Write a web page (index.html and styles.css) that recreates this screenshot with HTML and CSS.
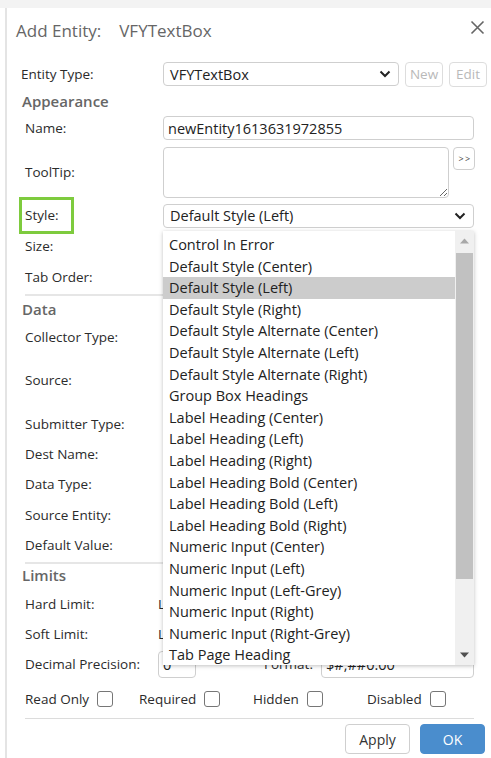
FILE: index.html
```html
<!DOCTYPE html>
<html lang="en">
<head>
<meta charset="utf-8">
<title>Add Entity</title>
<link rel="stylesheet" href="styles.css">
</head>
<body>
<div class="topstrip"></div>
<div class="dialog">
  <header class="dlg-head">
    <h1 class="dlg-title">Add Entity:<span class="dlg-entity">VFYTextBox</span></h1>
    <button class="close" aria-label="Close">
      <svg width="15" height="15" viewBox="0 0 15 15"><path d="M1.5 1.5 L13.5 13.5 M13.5 1.5 L1.5 13.5" stroke="#666" stroke-width="1.6" fill="none"/></svg>
    </button>
  </header>

  <div class="form">
    <div class="row row-entity">
      <label class="lbl">Entity Type:</label>
      <div class="ctl ctl-inline">
        <div class="select sel-entity"><span>VFYTextBox</span>
          <svg class="chev" width="12" height="8" viewBox="0 0 12 8"><path d="M1.5 1.5 L6 6 L10.5 1.5" stroke="#222" stroke-width="2" fill="none"/></svg>
        </div>
        <button class="btn-sm" disabled>New</button>
        <button class="btn-sm" disabled>Edit</button>
      </div>
    </div>

    <h2 class="section h-appear">Appearance</h2>
    <div class="row r-name">
      <label class="lbl">Name:</label>
      <div class="ctl"><input class="input w-full" type="text" value="newEntity1613631972855"></div>
    </div>
    <div class="row r-tip">
      <label class="lbl">ToolTip:</label>
      <div class="ctl ctl-top">
        <textarea class="textarea"></textarea>
        <button class="btn-more">&gt; &gt;</button>
      </div>
    </div>
    <div class="row r-style">
      <label class="lbl"><span class="hl">Style:</span></label>
      <div class="ctl">
        <div class="select w-full"><span>Default Style (Left)</span>
          <svg class="chev" width="12" height="8" viewBox="0 0 12 8"><path d="M1.5 1.5 L6 6 L10.5 1.5" stroke="#222" stroke-width="2" fill="none"/></svg>
        </div>
      </div>
    </div>
    <div class="row r-size"><label class="lbl">Size:</label></div>
    <div class="row r-tab"><label class="lbl">Tab Order:</label></div>
    <hr class="sep sep-a">

    <h2 class="section h-data">Data</h2>
    <div class="row r-coll"><label class="lbl">Collector Type:</label></div>
    <div class="row r-src"><label class="lbl">Source:</label></div>
    <div class="row r-sub"><label class="lbl">Submitter Type:</label></div>
    <div class="row r-dest"><label class="lbl">Dest Name:</label></div>
    <div class="row r-dtype"><label class="lbl">Data Type:</label></div>
    <div class="row r-sent"><label class="lbl">Source Entity:</label></div>
    <div class="row r-def"><label class="lbl">Default Value:</label></div>
    <hr class="sep sep-b">

    <h2 class="section h-lim">Limits</h2>
    <div class="row r-hard"><label class="lbl">Hard Limit:</label><span class="peek">L</span></div>
    <div class="row r-soft"><label class="lbl">Soft Limit:</label><span class="peek">L</span></div>
    <div class="row r-dec">
      <label class="lbl">Decimal Precision:</label>
      <input class="input in-dec" type="text" value="0">
      <span class="fmt-lbl">Format:</span>
      <input class="input in-fmt" type="text" value="$#,##0.00">
    </div>

    <div class="checks">
      <label class="chk">Read Only <span class="box"></span></label>
      <label class="chk">Required <span class="box"></span></label>
      <label class="chk">Hidden <span class="box"></span></label>
      <label class="chk">Disabled <span class="box"></span></label>
    </div>
    <hr class="sep sep-c">

    <div class="actions">
      <button class="btn btn-apply">Apply</button>
      <button class="btn btn-ok">OK</button>
    </div>
  </div>

  <!-- open list of the Style select -->
  <div class="dropdown">
    <ul class="options">
      <li>Control In Error</li>
      <li>Default Style (Center)</li>
      <li class="selected">Default Style (Left)</li>
      <li>Default Style (Right)</li>
      <li>Default Style Alternate (Center)</li>
      <li>Default Style Alternate (Left)</li>
      <li>Default Style Alternate (Right)</li>
      <li>Group Box Headings</li>
      <li>Label Heading (Center)</li>
      <li>Label Heading (Left)</li>
      <li>Label Heading (Right)</li>
      <li>Label Heading Bold (Center)</li>
      <li>Label Heading Bold (Left)</li>
      <li>Label Heading Bold (Right)</li>
      <li>Numeric Input (Center)</li>
      <li>Numeric Input (Left)</li>
      <li>Numeric Input (Left-Grey)</li>
      <li>Numeric Input (Right)</li>
      <li>Numeric Input (Right-Grey)</li>
      <li>Tab Page Heading</li>
    </ul>
    <div class="scrollbar">
      <svg class="arrow" width="9" height="6" viewBox="0 0 9 6"><path d="M0 5.5 L4.5 0.5 L9 5.5 Z" fill="#a8a8a8"/></svg>
      <div class="track"><div class="thumb"></div></div>
      <svg class="arrow" width="9" height="6" viewBox="0 0 9 6"><path d="M0 0.5 L4.5 5.5 L9 0.5 Z" fill="#505050"/></svg>
    </div>
  </div>
</div>
</body>
</html>
```

FILE: styles.css
```css
* { box-sizing: border-box; }

html, body {
  margin: 0;
  padding: 0;
  background: #fff;
  font-family: "Open Sans", "Noto Sans", sans-serif;
  font-size: 13.5px;
  color: #2b2b2b;
}

.topstrip {
  height: 8px;
  background: #f3f3f3;
}

.dialog {
  position: relative;
  margin-left: 5px;
  border-left: 2px solid #e4e4e4;
  height: 750px;
}

.dlg-head {
  height: 53px;
  display: flex;
  align-items: flex-start;
  justify-content: space-between;
  padding: 12px 6px 0 9px;
}

.dlg-title {
  margin: 0;
  font-weight: 400;
  font-size: 17px;
  color: #666;
  line-height: 22px;
}

.dlg-entity { margin-left: 18px; }

.close {
  border: 0;
  background: none;
  padding: 0;
  width: 15px;
  height: 15px;
  line-height: 0;
}

.form {
  padding-left: 18px;
  padding-right: 17px;
}

.row {
  display: flex;
  align-items: center;
}

.lbl {
  width: 138px;
  flex: none;
  color: #2b2b2b;
}

.ctl { flex: 1; display: flex; align-items: center; }
.ctl-top { align-items: flex-start; gap: 4px; }
.ctl-inline { gap: 6px; }

.row-entity { height: 26px; margin-left: -4px; margin-right: -10px; }
.row-entity .lbl { width: 142px; }

.section {
  margin: 0 0 0 -3px;
  font-size: 15px;
  font-weight: 600;
  color: #666;
  display: flex;
  align-items: center;
}
.h-appear { height: 28px; }
.h-data { height: 26px; }
.h-lim { height: 22px; }

.select, .input, .textarea {
  border: 1px solid #cfcfcf;
  border-radius: 4px;
  background: #fff;
  font-family: inherit;
  font-size: 14.5px;
  color: #222;
}

.select {
  height: 24px;
  display: flex;
  align-items: center;
  justify-content: space-between;
  padding: 0 7px 0 6px;
}

.sel-entity { width: 236px; }
.chev { display: block; }
.w-full { width: 100%; }

.input {
  height: 24px;
  padding: 0 4px;
  outline: none;
}

.textarea {
  width: 286px;
  height: 51px;
  resize: both;
  margin: 0;
  outline: none;
}

.btn-sm {
  height: 25px;
  width: 38px;
  padding: 0;
  border: 1px solid #ddd;
  border-radius: 4px;
  background: #fff;
  font-family: inherit;
  font-size: 13.5px;
  color: #b9b9b9;
}

.btn-more {
  width: 22px;
  height: 23px;
  padding: 0;
  border: 1px solid #cfcfcf;
  border-radius: 4px;
  background: #fff;
  font-family: inherit;
  font-size: 9px;
  color: #444;
  letter-spacing: -0.5px;
}

.r-name { height: 26px; }
.r-tip { height: 62px; }
.r-tip .ctl { padding-top: 1px; }
.r-style { height: 25px; }
.r-size { height: 36px; }
.r-tab { height: 26px; }

.hl {
  display: inline-block;
  width: 49px;
  height: 31px;
  line-height: 31px;
  margin-left: -3px;
  padding-left: 3px;
  outline: 3px solid #7ecb3e;
  vertical-align: middle;
}

.sep {
  border: 0;
  height: 2px;
  background: #e6e6e6;
  margin: 0;
}
.sep-a { margin: 4px 0 0 0; }
.sep-b { margin: 2px 0 0 0; }
.sep-c { height: 1px; background: #dcdcdc; margin: 2px 0 0 0; }

.r-coll { height: 30px; }
.r-src { height: 56px; }
.r-sub { height: 32px; }
.r-dest { height: 28px; }
.r-dtype { height: 32px; }
.r-sent { height: 30px; }
.r-def { height: 30px; }

.r-hard { height: 36px; }
.r-soft { height: 24px; }
.r-dec { height: 36px; }

.peek { margin-left: -5px; }

.in-dec { width: 38px; height: 27px; margin-left: -5px; }
.fmt-lbl { margin-left: 68px; width: 57px; }
.in-fmt { width: 153px; height: 27px; margin-left: 1px; }

.checks {
  height: 34px;
  display: grid;
  grid-template-columns: repeat(4, 114px);
  align-items: center;
}

.chk {
  display: flex;
  align-items: center;
  gap: 8px;
}

.box {
  width: 16px;
  height: 16px;
  border: 1px solid #767676;
  border-radius: 3px;
  background: #fff;
}

.actions {
  display: flex;
  justify-content: flex-end;
  gap: 10px;
  padding-top: 5px;
  margin-right: -11px;
}

.btn {
  width: 65px;
  height: 30px;
  border-radius: 4px;
  font-family: inherit;
  font-size: 14px;
}
.btn-apply { border: 1px solid #cfcfcf; background: #fff; color: #333; }
.btn-ok { border: 1px solid #4a8dcd; background: #4a8dcd; color: #fff; }

/* popup list */
.dropdown {
  position: absolute;
  left: 156px;
  top: 223px;
  width: 311px;
  height: 434px;
  background: #fff;
  display: flex;
  box-shadow: 0 1px 4px rgba(0,0,0,0.25);
}

.options {
  list-style: none;
  margin: 0;
  padding: 3px 0 0 0;
  flex: 1;
  font-size: 14.5px;
}

.options li {
  height: 21.6px;
  line-height: 21.6px;
  padding-left: 6px;
  color: #222;
  white-space: nowrap;
}

.options li.selected { background: #cccccc; }

.scrollbar {
  width: 19px;
  background: #f0f0f0;
  display: flex;
  flex-direction: column;
  align-items: center;
}

.arrow { flex: none; margin: 7px 0; }
.track { flex: 1; width: 100%; padding: 2px 1px 0; }
.thumb { height: 326px; background: #c1c1c1; }
```
